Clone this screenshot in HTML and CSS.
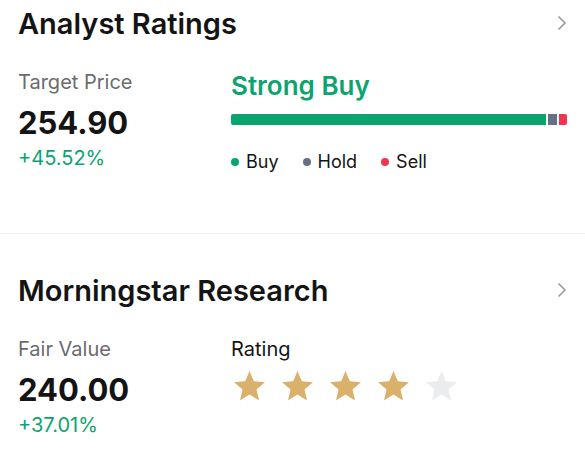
FILE: index.html
```html
<!DOCTYPE html>
<html>
<head>
<meta charset="utf-8">
<link rel="stylesheet" href="styles.css">
</head>
<body>
<section class="card card-first">
  <div class="card-head">
    <h2 class="card-title">Analyst Ratings</h2>
    <svg class="chev" viewBox="0 0 10 16" width="10" height="16"><path d="M1.5 1.5 L8 8 L1.5 14.5" fill="none" stroke="#9a9a9a" stroke-width="1.6"/></svg>
  </div>
  <div class="metrics">
    <div class="col-left">
      <div class="label">Target Price</div>
      <div class="value">254.90</div>
      <div class="pct">+45.52%</div>
    </div>
    <div class="col-right">
      <div class="verdict">Strong Buy</div>
      <div class="bar">
        <span class="seg seg-buy" style="width:94%"></span>
        <span class="seg seg-hold" style="width:2.6%"></span>
        <span class="seg seg-sell" style="width:2.4%"></span>
      </div>
      <div class="legend">
        <span class="lg"><i class="dot dot-buy"></i>Buy</span>
        <span class="lg"><i class="dot dot-hold"></i>Hold</span>
        <span class="lg"><i class="dot dot-sell"></i>Sell</span>
      </div>
    </div>
  </div>
</section>
<section class="card card-second">
  <div class="card-head">
    <h2 class="card-title">Morningstar Research</h2>
    <svg class="chev" viewBox="0 0 10 16" width="10" height="16"><path d="M1.5 1.5 L8 8 L1.5 14.5" fill="none" stroke="#9a9a9a" stroke-width="1.6"/></svg>
  </div>
  <div class="metrics">
    <div class="col-left">
      <div class="label">Fair Value</div>
      <div class="value">240.00</div>
      <div class="pct">+37.01%</div>
    </div>
    <div class="col-right">
      <div class="label label-dark">Rating</div>
      <div class="stars">
        <svg class="star on" viewBox="0 0 24 24"><path d="M12 17.27L18.18 21l-1.64-7.03L22 9.24l-7.19-.61L12 2 9.19 8.63 2 9.24l5.46 4.73L5.82 21z"/></svg>
        <svg class="star on" viewBox="0 0 24 24"><path d="M12 17.27L18.18 21l-1.64-7.03L22 9.24l-7.19-.61L12 2 9.19 8.63 2 9.24l5.46 4.73L5.82 21z"/></svg>
        <svg class="star on" viewBox="0 0 24 24"><path d="M12 17.27L18.18 21l-1.64-7.03L22 9.24l-7.19-.61L12 2 9.19 8.63 2 9.24l5.46 4.73L5.82 21z"/></svg>
        <svg class="star on" viewBox="0 0 24 24"><path d="M12 17.27L18.18 21l-1.64-7.03L22 9.24l-7.19-.61L12 2 9.19 8.63 2 9.24l5.46 4.73L5.82 21z"/></svg>
        <svg class="star off" viewBox="0 0 24 24"><path d="M12 17.27L18.18 21l-1.64-7.03L22 9.24l-7.19-.61L12 2 9.19 8.63 2 9.24l5.46 4.73L5.82 21z"/></svg>
      </div>
    </div>
  </div>
</section>
</body>
</html>
```
FILE: styles.css
```css
* { box-sizing: border-box; }
html, body { margin: 0; padding: 0; background: #fff; }
body {
  font-family: Inter, "Noto Sans", sans-serif;
  color: #141414;
  width: 585px;
  overflow: hidden;
}
.card { padding: 0 18px; }
.card-first { padding-bottom: 59px; border-bottom: 1px solid #f0f0f0; }
.card-second { padding-top: 33px; }
.card-head {
  display: flex;
  justify-content: space-between;
  align-items: center;
  height: 48px;
}
.card-title {
  margin: 0;
  font-size: 29px;
  line-height: 48px;
  font-weight: 600;
  color: #141414;
}
.chev { display: block; margin-top: -2px; }
.metrics {
  display: grid;
  grid-template-columns: 213px 1fr;
  padding-top: 21px;
}
.label {
  margin-top: 1px;
  font-size: 20px;
  line-height: 24px;
  color: #6b6b6e;
}
.label-dark { color: #141414; }
.value {
  margin-top: 9px;
  font-size: 31px;
  line-height: 40px;
  font-weight: 700;
}
.pct {
  margin-top: 3px;
  font-size: 20px;
  line-height: 24px;
  color: #0aa56f;
}
.verdict {
  font-size: 26px;
  line-height: 32px;
  font-weight: 600;
  color: #0aa56f;
  margin-top: 1px;
}
.bar {
  display: flex;
  gap: 2px;
  margin-top: 12px;
  height: 11px;
}
.seg { display: block; height: 100%; }
.seg-buy { background: #0aa56f; border-radius: 2px 0 0 2px; }
.seg-hold { background: #667085; }
.seg-sell { background: #f0364f; border-radius: 0 2px 2px 0; }
.legend {
  display: flex;
  gap: 24px;
  margin-top: 25px;
  font-size: 18px;
  line-height: 24px;
}
.lg { display: flex; align-items: center; }
.dot {
  display: inline-block;
  width: 8px;
  height: 8px;
  border-radius: 50%;
  margin-right: 7px;
}
.dot-buy { background: #0aa56f; }
.dot-hold { background: #667085; }
.dot-sell { background: #f0364f; }
.stars {
  display: flex;
  gap: 11px;
  margin-top: 7px;
}
.star { width: 37px; height: 37px; display: block; }
.star.on { fill: #dbb06a; }
.star.off { fill: #ebecee; }
```
